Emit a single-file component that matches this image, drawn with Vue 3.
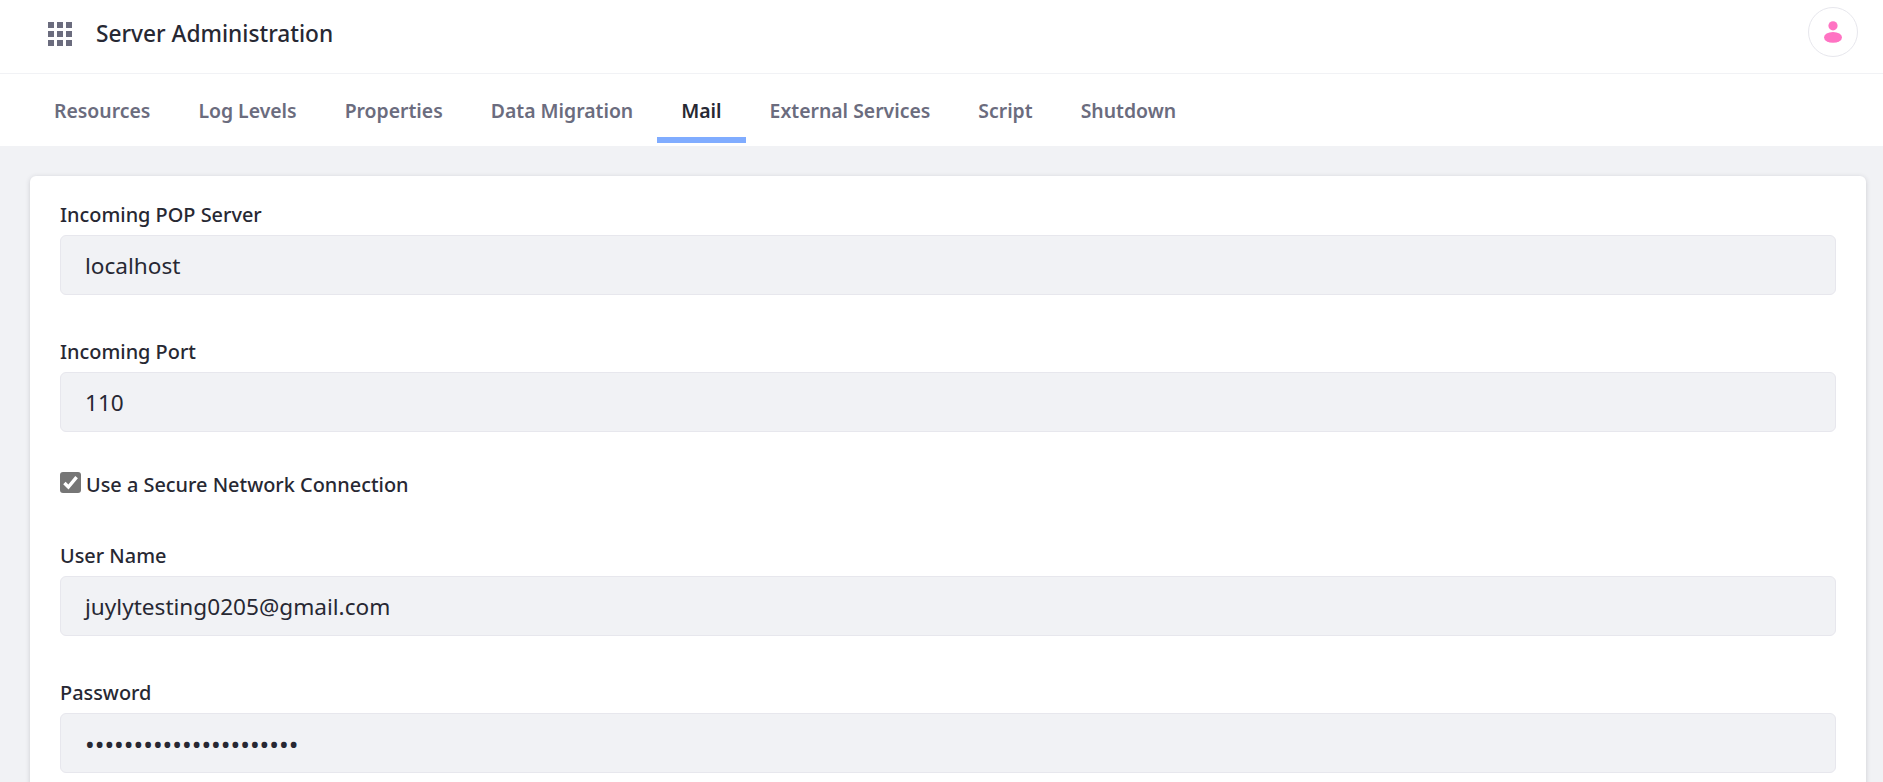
<script setup>
const tabs = ['Resources', 'Log Levels', 'Properties', 'Data Migration', 'Mail', 'External Services', 'Script', 'Shutdown']
const dots = '•'.repeat(22)
const gridCells = Array.from({ length: 9 }, (_, i) => ({ x: (i % 3) * 9, y: Math.floor(i / 3) * 9 }))
</script>

<template>
  <div class="page">
    <header class="topbar">
      <div class="brand">
        <svg class="apps" width="24" height="24" viewBox="0 0 24 24" aria-hidden="true">
          <rect v-for="(c, i) in gridCells" :key="i" :x="c.x" :y="c.y" width="6" height="6" fill="#6b6c7e" />
        </svg>
        <span class="title">Server Administration</span>
      </div>
      <div class="avatar">
        <svg width="18" height="22" viewBox="0 0 18 22" aria-hidden="true">
          <circle cx="9" cy="4.8" r="4.6" fill="#ff73c3" />
          <ellipse cx="9" cy="16.4" rx="9" ry="5.4" fill="#ff73c3" />
        </svg>
      </div>
    </header>
    <nav class="tabs">
      <a v-for="t in tabs" :key="t" class="tab" :class="{ active: t === 'Mail' }">{{ t }}</a>
    </nav>
    <main class="content">
      <section class="card">
        <div class="field first">
          <label>Incoming POP Server</label>
          <div class="input">localhost</div>
        </div>
        <div class="field">
          <label>Incoming Port</label>
          <div class="input">110</div>
        </div>
        <div class="check">
          <span class="box">
            <svg width="17" height="15" viewBox="0 0 17 15" aria-hidden="true">
              <path d="M2.4 8 L6.4 12 L14.6 2.2" fill="none" stroke="#fff" stroke-width="3.4" />
            </svg>
          </span>
          <span class="check-label">Use a Secure Network Connection</span>
        </div>
        <div class="field user">
          <label>User Name</label>
          <div class="input">juylytesting0205@gmail.com</div>
        </div>
        <div class="field">
          <label>Password</label>
          <div class="input pass">{{ dots }}</div>
        </div>
      </section>
    </main>
  </div>
</template>

<style>
html, body { margin: 0; height: 100%; overflow: hidden; background: #f1f2f5; }
</style>

<style scoped>
.page {
  height: 782px;
  overflow: hidden;
  background: #f1f2f5;
  font-family: "Noto Sans", "Open Sans", sans-serif;
  color: #272833;
}
.topbar {
  height: 66px;
  border-bottom: 1px solid #f1f2f5;
  background: #fff;
  display: flex;
  align-items: flex-start;
  justify-content: space-between;
  padding: 7px 25px 0 48px;
}
.brand { display: flex; align-items: center; gap: 24px; margin-top: 15px; }
.apps { display: block; }
.title { font-size: 22.7px; font-weight: 500; line-height: 24px; }
.avatar {
  width: 50px;
  height: 50px;
  box-sizing: border-box;
  border: 1px solid #e7e7ed;
  border-radius: 50%;
  display: flex;
  align-items: center;
  justify-content: center;
  background: #fff;
}
.tabs {
  height: 72px;
  background: #fff;
  display: flex;
  padding-left: 30px;
}
.tab {
  height: 69px;
  box-sizing: border-box;
  padding: 25px 24px 0;
  border-bottom: 6px solid transparent;
  font-size: 19.4px;
  line-height: 24px;
  font-weight: 600;
  color: #6b6c7e;
}
.tab.active { color: #272833; border-bottom-color: #80acff; }
.content { padding: 30px 17px 0 30px; }
.card {
  background: #fff;
  border-radius: 6px;
  box-shadow: 0 1px 5px rgba(39, 40, 51, 0.18);
  padding: 27px 30px 40px;
  height: 700px;
  box-sizing: border-box;
}
.field { margin-top: 45px; }
.field.first { margin-top: 0; }
.field.user { margin-top: 47px; }
label {
  display: block;
  font-size: 19.9px;
  line-height: 24px;
  font-weight: 500;
  height: 24px;
  margin-bottom: 8px;
  color: #272833;
}
.input {
  height: 60px;
  box-sizing: border-box;
  border: 1px solid #e7e7ed;
  border-radius: 6px;
  background: #f1f2f5;
  padding: 0 24px;
  font-size: 22.6px;
  line-height: 60px;
  color: #272833;
}
.pass { font-size: 25.8px; line-height: 60px; }
.check {
  display: flex;
  align-items: flex-start;
  gap: 5px;
  margin-top: 41px;
  height: 24px;
}
.box {
  width: 21px;
  height: 21px;
  margin-top: -1px;
  border-radius: 3px;
  background: #767676;
  display: flex;
  align-items: center;
  justify-content: center;
}
.check-label { font-size: 19.9px; line-height: 24px; font-weight: 500; }
</style>
